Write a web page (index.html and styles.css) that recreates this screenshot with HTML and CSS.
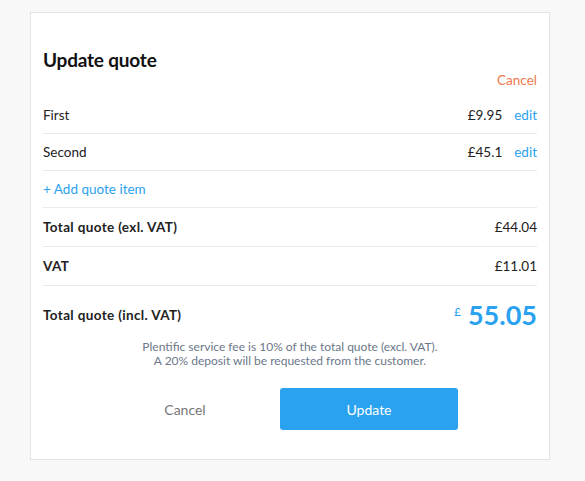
FILE: index.html
```html
<!DOCTYPE html>
<html>
<head>
<meta charset="utf-8">
<link rel="stylesheet" href="styles.css">
</head>
<body>
<div class="card">
  <h1 class="title">Update quote</h1>
  <div class="cancel-top"><span>Cancel</span></div>
  <div class="row">
    <span class="label">First</span>
    <span class="amount">£9.95</span>
    <span class="edit">edit</span>
  </div>
  <div class="row">
    <span class="label">Second</span>
    <span class="amount">£45.1</span>
    <span class="edit">edit</span>
  </div>
  <div class="row add"><span class="add-link">+ Add quote item</span></div>
  <div class="row tall strong">
    <span class="label">Total quote (exl. VAT)</span>
    <span class="amount plain">£44.04</span>
  </div>
  <div class="row tall strong">
    <span class="label">VAT</span>
    <span class="amount plain">£11.01</span>
  </div>
  <div class="row total strong">
    <span class="label">Total quote (incl. VAT)</span>
    <span class="big"><sup class="cur">£</sup>55.05</span>
  </div>
  <p class="note">Plentific service fee is 10% of the total quote (excl. VAT).<br>A 20% deposit will be requested from the customer.</p>
  <div class="actions">
    <button class="btn btn-ghost">Cancel</button>
    <button class="btn btn-primary">Update</button>
  </div>
</div>
</body>
</html>
```
FILE: styles.css
```css
* { box-sizing: border-box; }
html, body { margin: 0; padding: 0; }
body {
  background: #f8f8f8;
  font-family: Lato, "Noto Sans", sans-serif;
  color: #222;
  width: 585px;
  height: 481px;
  padding-top: 12px;
}
.card {
  margin-left: 30px;
  width: 520px;
  height: 448px;
  background: #fff;
  border: 1px solid #e3e3e3;
  padding: 0 12px 0 12px;
}
.title {
  margin: 36px 0 0 0;
  font-size: 19px;
  font-weight: 700;
  line-height: 22px;
  letter-spacing: -0.2px;
  color: #111;
}
.cancel-top {
  display: flex;
  justify-content: flex-end;
  font-size: 13.5px;
  line-height: 18px;
  color: #f0784e;
  margin-bottom: 8px;
}
.row {
  display: flex;
  align-items: center;
  height: 37px;
  border-bottom: 1px solid #ebebeb;
  font-size: 13.5px;
}
.row .label { flex: 1; }
.amount { color: #222; }
.edit { color: #2ba2ef; margin-left: 12px; }
.add-link { color: #2ba2ef; }
.row.tall { height: 39px; }
.strong .label { font-weight: 700; letter-spacing: 0.35px; }
.row.total {
  border-bottom: none;
  height: 57px;
  padding-top: 1px;
}
.big {
  color: #2aa2f0;
  font-size: 27px;
  font-weight: 700;
  line-height: 30px;
  margin-top: -3px;
}
.cur {
  font-size: 12px;
  font-weight: 400;
  vertical-align: 9px;
  margin-right: 7px;
}
.note {
  margin: -3px 0 0 0;
  text-align: center;
  font-size: 12px;
  line-height: 14px;
  color: #6b7789;
}
.actions {
  display: flex;
  gap: 6px;
  margin-top: 20px;
  padding-left: 53px;
}
.btn {
  width: 178px;
  height: 42px;
  border: none;
  border-radius: 3px;
  font-family: inherit;
  font-size: 14px;
}
.btn-ghost { background: transparent; color: #777; }
.btn-primary { background: #2aa2f0; color: #fff; }
```
